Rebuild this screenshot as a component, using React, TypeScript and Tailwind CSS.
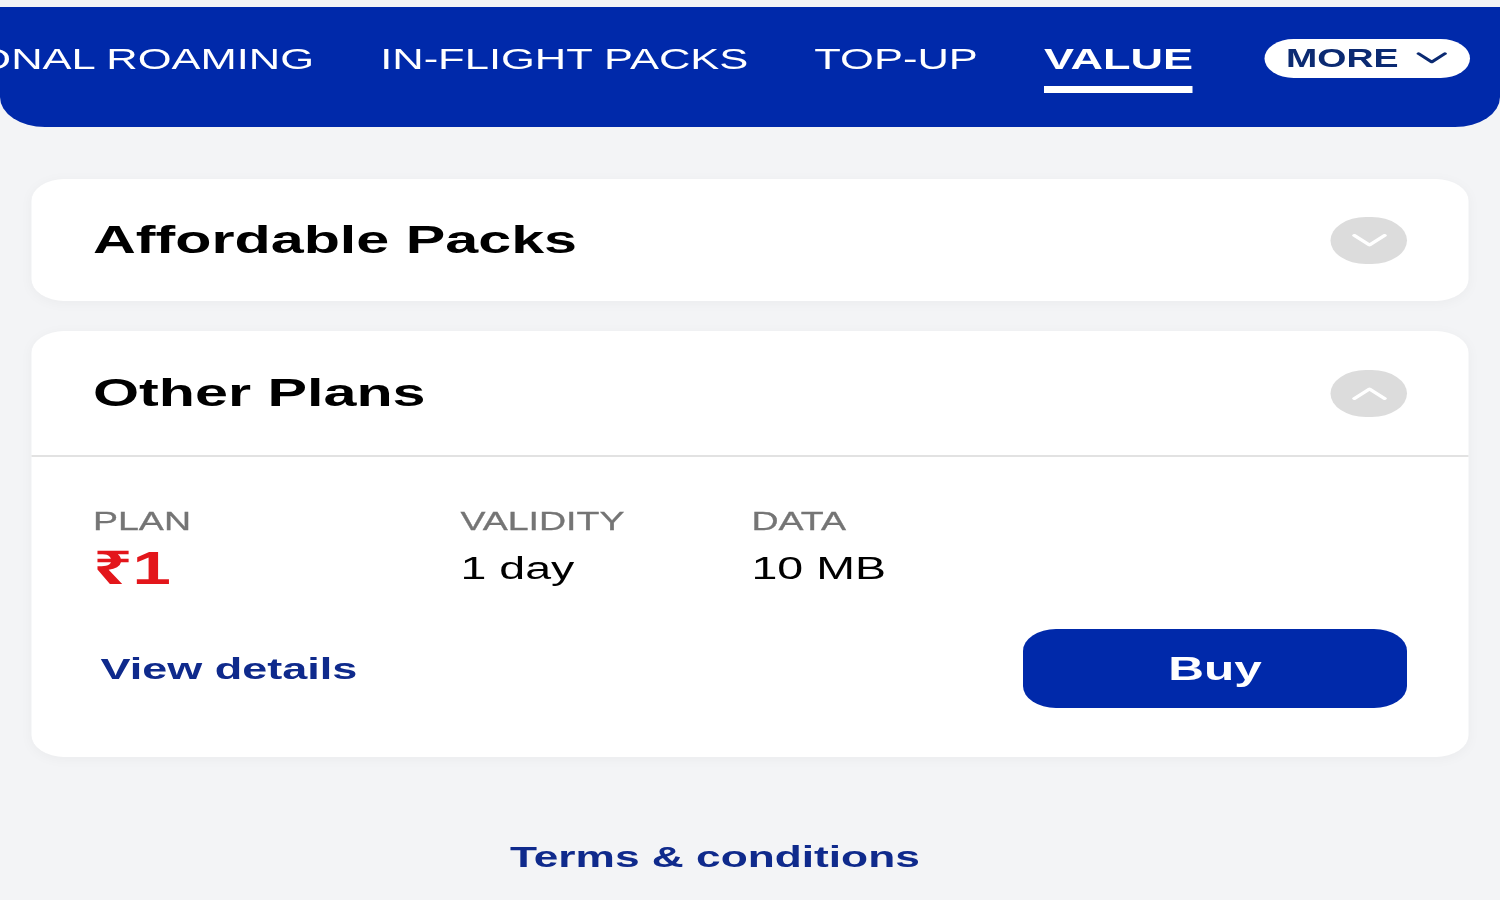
import { type ReactNode } from "react";

const tabs = [
  { label: "INTERNATIONAL ROAMING", active: false },
  { label: "IN-FLIGHT PACKS", active: false },
  { label: "TOP-UP", active: false },
  { label: "VALUE", active: true }
];

function Chevron({
  up = false,
  className
}: {
  up?: boolean;
  className?: string;
}) {
  return (
    <svg viewBox="0 0 24 13" className={className} fill="none">
      <path
        d={up ? "M2 11.5 L12 2 L22 11.5" : "M2 1.5 L12 11 L22 1.5"}
        stroke="currentColor"
        strokeWidth="3"
        strokeLinecap="round"
        strokeLinejoin="round"
      />
    </svg>
  );
}

function ToggleDot({ up = false }: { up?: boolean }) {
  return (
    <div className="flex h-[47px] w-[51px] items-center justify-center rounded-full bg-[#dcdcdc]">
      <Chevron up={up} className="h-[13px] w-[24px] text-white" />
    </div>
  );
}

function Card({
  children,
  className
}: {
  children: ReactNode;
  className?: string;
}) {
  return (
    <div
      className={`rounded-[22px] bg-white shadow-[0_2px_10px_rgba(0,0,0,0.04)] ${className ?? ""}`}
    >
      {children}
    </div>
  );
}

function CardHeader({ title, open }: { title: string; open: boolean }) {
  return (
    <div
      className={`flex items-center justify-between px-[41px] ${
        open ? "h-[126px] border-b-2 border-[#e2e2e2]" : "h-[122px]"
      }`}
    >
      <h2 className="text-[39.5px] font-bold leading-none text-black">{title}</h2>
      <ToggleDot up={open} />
    </div>
  );
}

function PlanColumn({
  label,
  value,
  valueClass,
  width
}: {
  label: string;
  value: string;
  valueClass: string;
  width?: string;
}) {
  return (
    <div className={`flex flex-col ${width ?? ""}`}>
      <p className="text-[25px] leading-none text-[#757575] [-webkit-text-stroke:0.3px_#757575]">
        {label}
      </p>
      <p className={`leading-none ${valueClass}`}>{value}</p>
    </div>
  );
}

export default function App() {
  return (
    <div
      className="min-h-screen w-full overflow-hidden bg-[#f3f4f6]"
      style={{ fontFamily: '"Liberation Sans", "Noto Sans", Arial, sans-serif' }}
    >
      <div className="w-[1000px] origin-left scale-x-150 pt-[7px]">
        <header className="h-[120px] rounded-b-[30px] bg-[#0029aa]">
          <nav className="ml-[-166px] flex h-[40px] translate-y-[33px] items-center gap-[44px] whitespace-nowrap text-white">
            {tabs.map((tab) => (
              <div key={tab.label} className="relative">
                <span
                  className={`leading-none ${
                    tab.active ? "text-[30px] font-bold" : "text-[29px] font-normal"
                  }`}
                >
                  {tab.label}
                </span>
                {tab.active ? (
                  <span className="absolute left-0 right-0 top-[42px] h-[7px] bg-white" />
                ) : null}
              </div>
            ))}
            <button
              type="button"
              className="ml-[4px] flex h-[39px] w-[137px] -translate-y-[2px] items-center justify-between rounded-full bg-white pl-[14px] pr-[15px] text-[#0b2a72]"
            >
              <span className="text-[25px] font-bold leading-none">MORE</span>
              <Chevron className="h-[12px] w-[21px]" />
            </button>
          </nav>
        </header>

        <main className="px-[21px]">
          <Card className="mt-[52px]">
            <CardHeader title="Affordable Packs" open={false} />
          </Card>

          <Card className="mt-[30px]">
            <CardHeader title="Other Plans" open />
            <div className="px-[41px] pb-[49px] pt-[52px]">
              <div className="flex">
                <PlanColumn
                  label="PLAN"
                  value="₹1"
                  width="w-[245px]"
                  valueClass="mt-[11px] text-[46px] font-bold text-[#e3161b]"
                />
                <PlanColumn
                  label="VALIDITY"
                  value="1 day"
                  width="w-[194px]"
                  valueClass="mt-[19px] text-[31px] text-black"
                />
                <PlanColumn
                  label="DATA"
                  value="10 MB"
                  valueClass="mt-[19px] text-[31px] text-black"
                />
              </div>
              <div className="mt-[38px] flex items-center justify-between">
                <a className="ml-[5px] text-[30px] font-bold leading-none text-[#0f2a8c]">
                  View details
                </a>
                <button
                  type="button"
                  className="flex h-[79px] w-[256px] items-center justify-center rounded-[22px] bg-[#0029aa] text-[33px] font-bold leading-none text-white"
                >
                  Buy
                </button>
              </div>
            </div>
          </Card>

          <p className="mt-[85px] pl-[319px] text-[29.5px] font-bold leading-none text-[#0f2a8c]">
            Terms &amp; conditions
          </p>
        </main>
      </div>
    </div>
  );
}
